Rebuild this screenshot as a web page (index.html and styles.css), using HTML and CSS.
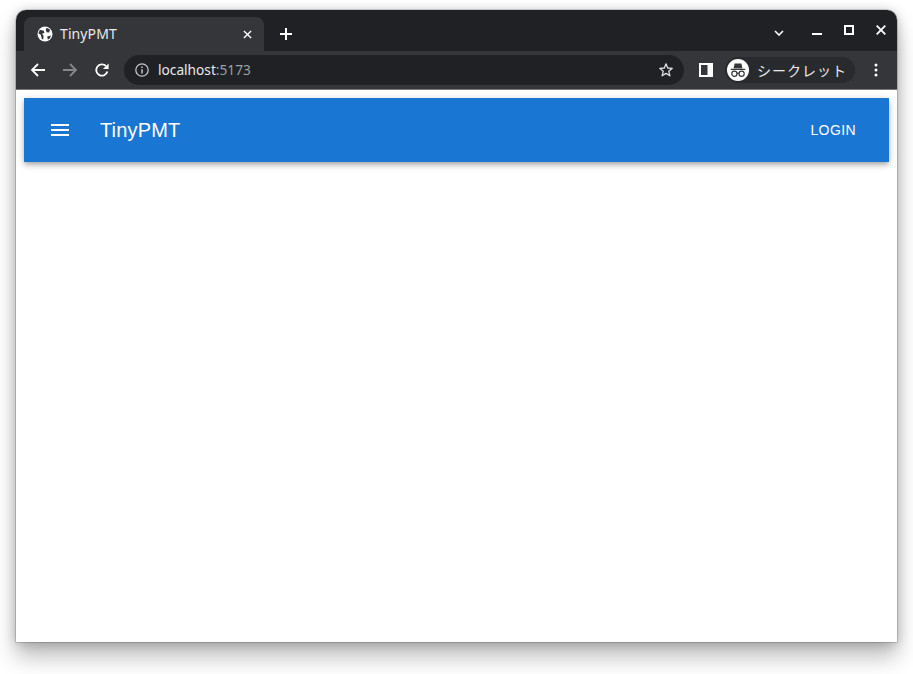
FILE: index.html
```html
<!DOCTYPE html>
<html lang="en">
<head>
<meta charset="utf-8">
<title>TinyPMT</title>
<link rel="stylesheet" href="styles.css">
</head>
<body>
<div class="window">
  <div class="tabstrip">
    <div class="tab">
      <svg class="favicon" viewBox="0 0 16 16"><circle cx="8" cy="8" r="7.500" fill="#fff"/><path d="M2.800 3.800 6.800 4.800 7.400 7 5 7.800 6.600 9.800 6.200 13.400 4.800 13 3.800 8.800 1.400 7.200ZM9.600 1.800 13 3.600 12.200 6.600 9.600 6.200 8.800 3.800ZM14 9.400 12.800 12.400 10.800 13.600 10.200 10.400Z" fill="#35363a"/></svg>
      <span class="tab-title">TinyPMT</span>
      <svg class="tab-close" viewBox="0 0 10 10"><path d="M1 1 9 9M9 1 1 9" stroke="#fff" stroke-width="1.500"/></svg>
    </div>
    <svg class="new-tab" viewBox="0 0 12 12"><path d="M6 0V12M0 6H12" stroke="#fff" stroke-width="2"/></svg>
    <div class="window-controls">
      <svg class="ctl-chevron" viewBox="0 0 10 6"><path d="M1 1 5 5 9 1" fill="none" stroke="#fff" stroke-width="1.600"/></svg>
      <svg class="ctl-min" viewBox="0 0 10 2"><path d="M0 1H10" stroke="#fff" stroke-width="2"/></svg>
      <svg class="ctl-max" viewBox="0 0 10 10"><rect x="1" y="1" width="8" height="8" fill="none" stroke="#fff" stroke-width="2"/></svg>
      <svg class="ctl-close" viewBox="0 0 10 10"><path d="M.7.7 9.300 9.300M9.300.7.7 9.300" stroke="#fff" stroke-width="1.800"/></svg>
    </div>
  </div>
  <div class="toolbar">
    <svg class="nav-icon" viewBox="0 0 16 16"><path d="M15 8H2.500M8 2 2 8l6 6" fill="none" stroke="#fff" stroke-width="1.800"/></svg>
    <svg class="nav-icon" viewBox="0 0 16 16"><path d="M1 8h12.500M8 2l6 6-6 6" fill="none" stroke="#85868a" stroke-width="1.800"/></svg>
    <svg class="nav-icon" viewBox="0 0 16 16"><path d="M13.400 9.600A5.700 5.700 0 1 1 12 4" fill="none" stroke="#fff" stroke-width="1.800"/><path d="M14.600 1.400V7H9Z" fill="#fff"/></svg>
    <div class="omnibox">
      <svg class="info" viewBox="0 0 14 14"><circle cx="7" cy="7" r="6.200" fill="none" stroke="#c4c6c9" stroke-width="1.300"/><path d="M7 6.200V10.400M7 3.400V5.100" stroke="#c4c6c9" stroke-width="1.500"/></svg>
      <span class="url">localhost<span class="port">:5173</span></span>
      <svg class="star" viewBox="0 0 16 16"><path d="M8 1.800 9.700 6l4.600.3-3.500 3 1.100 4.500L8 11.400l-3.900 2.400 1.100-4.500-3.500-3L6.300 6Z" fill="none" stroke="#dfe1e5" stroke-width="1.300" stroke-linejoin="round"/></svg>
    </div>
    <svg class="side-panel" viewBox="0 0 14 14"><rect width="14" height="14" fill="#fff"/><rect x="2" y="2" width="6.500" height="10" fill="#35363a"/></svg>
    <div class="profile">
      <svg class="incognito" viewBox="0 0 22 22"><circle cx="11" cy="11" r="11" fill="#fff"/><path d="M7.600 4.600h6.800l1 4.600H6.600ZM3.800 9.700h14.400v1.200H3.800Z" fill="#35363a"/><g fill="none" stroke="#35363a" stroke-width="1.200"><circle cx="7.400" cy="14.800" r="2.600"/><circle cx="14.600" cy="14.800" r="2.600"/><path d="M10 14.400h2"/></g></svg>
      <span class="profile-name">シークレット</span>
    </div>
    <svg class="menu-dots" viewBox="0 0 4 14"><circle cx="2" cy="2" r="1.500" fill="#fff"/><circle cx="2" cy="7" r="1.500" fill="#fff"/><circle cx="2" cy="12" r="1.500" fill="#fff"/></svg>
  </div>
  <div class="page">
    <header class="appbar">
      <svg class="hamburger" viewBox="0 0 18 12"><path d="M0 0h18v2H0ZM0 5h18v2H0ZM0 10h18v2H0Z" fill="#fff"/></svg>
      <h1 class="app-title">TinyPMT</h1>
      <button class="login">Login</button>
    </header>
  </div>
</div>
</body>
</html>
```
FILE: styles.css
```css
* { box-sizing: border-box; }
html, body { margin: 0; height: 100%; background: #fff; overflow: hidden; }
body { padding: 10px 16px 32px; }
.window {
  height: 632px;
  display: flex;
  flex-direction: column;
  border-radius: 10px 10px 0 0;
  background: #fff;
  overflow: hidden;
  box-shadow: 0 15px 22px rgba(0,0,0,.26), 0 1px 12px rgba(0,0,0,.22), 0 0 0 .5px rgba(0,0,0,.3);
  font-family: "Noto Sans", sans-serif;
}
.tabstrip {
  height: 41px;
  flex: none;
  display: flex;
  align-items: flex-end;
  padding-left: 8px;
  background: #202124;
}
.tab {
  width: 240px;
  height: 34px;
  display: flex;
  align-items: center;
  padding: 0 12px 0 13px;
  border-radius: 8px 8px 0 0;
  background: #35363a;
}
.favicon { width: 16px; height: 16px; flex: none; }
.tab-title { margin-left: 7px; flex: 1; color: #e8eaed; font-size: 14px; line-height: 18px; letter-spacing: .1px; }
.tab-close { width: 9px; height: 9px; flex: none; }
.new-tab { width: 12px; height: 12px; margin: 0 0 11px 16px; flex: none; }
.window-controls {
  margin: 0 11px 0 auto;
  align-self: stretch;
  display: flex;
  align-items: center;
  padding-bottom: 1px;
}
.ctl-chevron { width: 10px; height: 6px; margin-top: 5px; }
.ctl-min { width: 10px; height: 2px; margin: 7px 0 0 28px; }
.ctl-max { width: 10px; height: 10px; margin: -1px 0 0 22px; }
.ctl-close { width: 10px; height: 10px; margin: -1px 0 0 22px; }
.toolbar {
  height: 38px;
  flex: none;
  display: flex;
  align-items: center;
  padding-left: 14px;
  background: #35363a;
}
.nav-icon { width: 16px; height: 16px; margin-right: 16px; flex: none; }
.nav-icon:nth-of-type(3) { margin-right: 14px; }
.omnibox {
  width: 560px;
  height: 30px;
  flex: none;
  display: flex;
  align-items: center;
  padding: 0 10px 0 11px;
  border-radius: 15px;
  background: #202124;
}
.info { width: 14px; height: 14px; flex: none; }
.url { margin-left: 9px; flex: 1; color: #e8eaed; font-size: 13.700px; line-height: 18px; }
.port { color: #9aa0a6; }
.star { width: 16px; height: 16px; flex: none; }
.side-panel { width: 14px; height: 14px; margin-left: 15px; flex: none; }
.profile {
  width: 130px;
  height: 26px;
  flex: none;
  margin-left: 12px;
  display: flex;
  align-items: center;
  padding-left: 2px;
  border-radius: 13px;
  background: #292a2d;
}
.incognito { width: 22px; height: 22px; flex: none; }
.profile-name {
  margin-left: 8px;
  color: #e8eaed;
  font-family: "Noto Sans CJK JP", sans-serif;
  font-size: 14px;
  line-height: 18px;
  letter-spacing: 1px;
  white-space: nowrap;
}
.menu-dots { width: 4px; height: 14px; margin-left: 19px; flex: none; }
.page {
  flex: 1;
  padding: 8px;
  border-top: 1px solid #77787a;
  background: #fff;
}
.appbar {
  height: 64px;
  display: flex;
  align-items: center;
  padding: 0 25px 0 27px;
  background: #1976d2;
  color: #fff;
  font-family: "Liberation Sans", Arial, sans-serif;
  box-shadow: 0 2px 4px -1px rgba(0,0,0,.2), 0 4px 5px rgba(0,0,0,.14), 0 1px 10px rgba(0,0,0,.12);
}
.hamburger { width: 18px; height: 12px; flex: none; }
.app-title { flex: 1; margin: 0 0 0 31px; font-size: 20px; font-weight: 400; line-height: 32px; letter-spacing: .15px; }
.login {
  padding: 6px 8px;
  border: 0;
  background: none;
  color: #fff;
  font: 400 14px/24px "Liberation Sans", Arial, sans-serif;
  letter-spacing: .4px;
  text-transform: uppercase;
}
```
